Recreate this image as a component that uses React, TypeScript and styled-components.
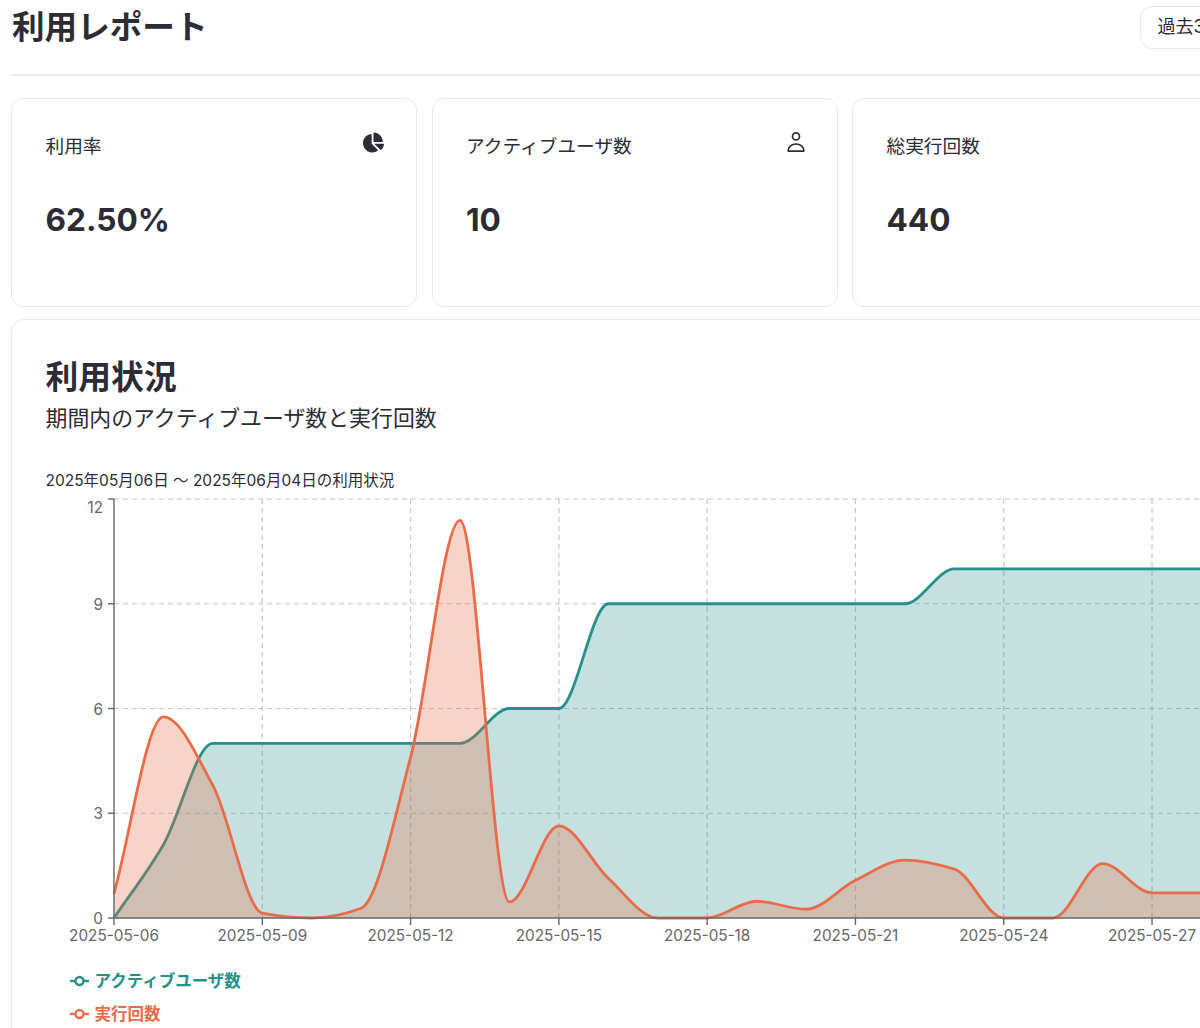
import React from "react";
import styled, { createGlobalStyle } from "styled-components";
import { FaChartPie } from "react-icons/fa";

const TEAL = "#26908a";
const ORANGE = "#e96c4a";
const DAY_WIDTH = 49.43;
const AXIS_X = 68;
const AXIS_TOP = 7;
const AXIS_BOTTOM = 426;
const UNIT = (AXIS_BOTTOM - AXIS_TOP) / 12;

const activeUsers = [
    0, 2.1, 5, 5, 5, 5, 5, 5, 6, 6, 9, 9, 9, 9, 9, 9, 9, 10, 10, 10, 10, 10, 10, 10, 10, 10, 10, 10, 10, 10,
];
const executions = [
    0.7, 5.76, 3.8, 0.14, 0, 0.28, 4.6, 11.39, 0.46, 2.64, 1.14, 0, 0, 0.48, 0.25, 1.08, 1.66, 1.4, 0, 0, 1.56,
    0.72, 0.72, 0.72, 1.2, 0.6, 0.9, 1.1, 0.7, 0.5,
];
const tickDays = [0, 3, 6, 9, 12, 15, 18, 21, 24, 27];
const tickLabels = [
    "2025-05-06",
    "2025-05-09",
    "2025-05-12",
    "2025-05-15",
    "2025-05-18",
    "2025-05-21",
    "2025-05-24",
    "2025-05-27",
    "2025-05-30",
    "2025-06-02",
];
const yTicks = [0, 3, 6, 9, 12];

type Point = [number, number];

function toPoints(values: number[]): Point[] {
    return values.map((v, i) => [AXIS_X + i * DAY_WIDTH, AXIS_BOTTOM - v * UNIT]);
}

// monotone cubic, same curve the chart in the screenshot uses
function monotonePath(points: Point[]) {
    const n = points.length;
    const slopes: number[] = [];
    for (let i = 0; i < n - 1; i++) {
        slopes.push((points[i + 1][1] - points[i][1]) / (points[i + 1][0] - points[i][0]));
    }
    const tangents: number[] = [slopes[0]];
    for (let i = 1; i < n - 1; i++) {
        const a = slopes[i - 1];
        const b = slopes[i];
        tangents.push(a * b <= 0 ? 0 : (2 * a * b) / (a + b));
    }
    tangents.push(slopes[n - 2]);
    let d = `M${points[0][0]},${points[0][1]}`;
    for (let i = 0; i < n - 1; i++) {
        const [x0, y0] = points[i];
        const [x1, y1] = points[i + 1];
        const h = (x1 - x0) / 3;
        d += `C${x0 + h},${y0 + tangents[i] * h} ${x1 - h},${y1 - tangents[i + 1] * h} ${x1},${y1}`;
    }
    return d;
}

function areaPath(points: Point[]) {
    const last = points[points.length - 1];
    return `${monotonePath(points)}L${last[0]},${AXIS_BOTTOM}L${points[0][0]},${AXIS_BOTTOM}Z`;
}

function UsageChart() {
    const userPoints = toPoints(activeUsers);
    const execPoints = toPoints(executions);
    const plotRight = AXIS_X + 29 * DAY_WIDTH;

    return (
        <ChartSvg width={1540} height={460}>
            <g stroke="#c6c6c6" strokeWidth={1.2} strokeDasharray="5 4">
                {yTicks
                    .filter((t) => t > 0)
                    .map((t) => (
                        <line key={t} x1={AXIS_X} x2={plotRight} y1={AXIS_BOTTOM - t * UNIT} y2={AXIS_BOTTOM - t * UNIT} />
                    ))}
                {tickDays
                    .filter((d) => d > 0)
                    .map((d) => (
                        <line key={d} x1={AXIS_X + d * DAY_WIDTH} x2={AXIS_X + d * DAY_WIDTH} y1={AXIS_TOP} y2={AXIS_BOTTOM} />
                    ))}
            </g>
            <path d={areaPath(userPoints)} fill={TEAL} fillOpacity={0.27} />
            <path d={monotonePath(userPoints)} fill="none" stroke={TEAL} strokeWidth={2.8} />
            <path d={areaPath(execPoints)} fill={ORANGE} fillOpacity={0.3} />
            <path d={monotonePath(execPoints)} fill="none" stroke={ORANGE} strokeWidth={2.8} />
            <g stroke="#666" strokeWidth={1.4}>
                <line x1={AXIS_X} x2={AXIS_X} y1={AXIS_TOP} y2={AXIS_BOTTOM} />
                <line x1={AXIS_X} x2={plotRight} y1={AXIS_BOTTOM} y2={AXIS_BOTTOM} />
                {yTicks.map((t) => (
                    <line key={t} x1={AXIS_X - 6} x2={AXIS_X} y1={AXIS_BOTTOM - t * UNIT} y2={AXIS_BOTTOM - t * UNIT} />
                ))}
                {tickDays.map((d) => (
                    <line key={d} x1={AXIS_X + d * DAY_WIDTH} x2={AXIS_X + d * DAY_WIDTH} y1={AXIS_BOTTOM} y2={AXIS_BOTTOM + 7} />
                ))}
            </g>
            {yTicks.map((t) => (
                <TickText key={t} x={AXIS_X - 11} y={t === 12 ? AXIS_TOP + 14 : AXIS_BOTTOM - t * UNIT + 6} textAnchor="end">
                    {t}
                </TickText>
            ))}
            {tickDays.map((d, i) => (
                <TickText key={d} x={AXIS_X + d * DAY_WIDTH} y={AXIS_BOTTOM + 23} textAnchor="middle">
                    {tickLabels[i]}
                </TickText>
            ))}
        </ChartSvg>
    );
}

function UserIcon() {
    return (
        <svg width={18} height={20} viewBox="0 0 18 20" fill="none" stroke="#2c2c36" strokeWidth={1.7}>
            <circle cx={9} cy={4.4} r={3.5} />
            <path d="M1.2 19.1C1.2 14.9 4.6 12 9 12C13.4 12 16.8 14.9 16.8 19.1Z" strokeLinejoin="round" />
        </svg>
    );
}

function LegendIcon({ color }: { color: string }) {
    return (
        <svg width={19} height={12} viewBox="0 0 19 12">
            <line x1={0} x2={19} y1={6} y2={6} stroke={color} strokeWidth={2.4} />
            <circle cx={9.5} cy={6} r={4} fill="#fff" stroke={color} strokeWidth={2.4} />
        </svg>
    );
}

export default function App() {
    return (
        <>
            <GlobalStyle />
            <Page>
                <HeaderRow>
                    <PageTitle>利用レポート</PageTitle>
                    <PeriodSelect>過去30日間</PeriodSelect>
                </HeaderRow>
                <Divider />
                <StatGrid>
                    <StatCard>
                        <StatHead>
                            <StatLabel>利用率</StatLabel>
                            <PieSlot>
                                <FaChartPie size={21} />
                            </PieSlot>
                        </StatHead>
                        <StatValue>62.50%</StatValue>
                    </StatCard>
                    <StatCard>
                        <StatHead>
                            <StatLabel>アクティブユーザ数</StatLabel>
                            <UserSlot>
                                <UserIcon />
                            </UserSlot>
                        </StatHead>
                        <StatValue>10</StatValue>
                    </StatCard>
                    <StatCard>
                        <StatHead>
                            <StatLabel>総実行回数</StatLabel>
                        </StatHead>
                        <StatValue>440</StatValue>
                    </StatCard>
                </StatGrid>
                <UsageCard>
                    <UsageTitle>利用状況</UsageTitle>
                    <UsageSubtitle>期間内のアクティブユーザ数と実行回数</UsageSubtitle>
                    <ChartCaption>2025年05月06日 〜 2025年06月04日の利用状況</ChartCaption>
                    <UsageChart />
                    <Legend>
                        <LegendItem $color={TEAL}>
                            <LegendIcon color={TEAL} />
                            アクティブユーザ数
                        </LegendItem>
                        <LegendItem $color={ORANGE}>
                            <LegendIcon color={ORANGE} />
                            実行回数
                        </LegendItem>
                    </Legend>
                </UsageCard>
            </Page>
        </>
    );
}

const GlobalStyle = createGlobalStyle`
    html, body {
        margin: 0;
        height: 100%;
        overflow: hidden;
        background: #fff;
    }
    body {
        font-family: Inter, "Noto Sans CJK JP", sans-serif;
        color: #2c2c36;
    }
`;

const Page = styled.div`
    width: 1669px;
    padding: 6px 0 0 11px;
`;

const HeaderRow = styled.div`
    display: flex;
    align-items: center;
    justify-content: space-between;
    width: 1249px;
    height: 43px;
`;

const PageTitle = styled.h1`
    margin: 0 0 0 1px;
    font-size: 32.6px;
    font-weight: 700;
    line-height: 43px;
`;

const PeriodSelect = styled.div`
    box-sizing: border-box;
    width: 120px;
    height: 43px;
    padding: 0 16.5px;
    border: 1.5px solid #e2e8f2;
    border-radius: 12px;
    font-size: 18px;
    line-height: 39px;
    white-space: nowrap;
    overflow: hidden;
`;

const Divider = styled.div`
    height: 2px;
    margin-top: 25px;
    background: #e8edf5;
`;

const StatGrid = styled.div`
    display: grid;
    grid-template-columns: repeat(3, 406px);
    gap: 14.5px;
    margin-top: 22px;
`;

const StatCard = styled.div`
    box-sizing: border-box;
    height: 209px;
    padding: 35px 32.5px 0 33.5px;
    border: 1.5px solid #e2e8f2;
    border-radius: 12px;
`;

const StatHead = styled.div`
    display: flex;
    align-items: flex-start;
    justify-content: space-between;
`;

const StatLabel = styled.div`
    font-size: 18.7px;
    line-height: 26px;
`;

const PieSlot = styled.div`
    display: flex;
    height: 20px;
    margin: -2.5px 0 0 0;
    color: #2c2c36;
`;

const UserSlot = styled.div`
    display: flex;
    height: 20px;
    margin: -2.5px -1px 0 0;
`;

const StatValue = styled.div`
    margin-top: 38px;
    font-size: 31.6px;
    font-weight: 700;
    line-height: 44px;
`;

const UsageCard = styled.div`
    box-sizing: border-box;
    margin-top: 12px;
    padding: 33.5px 33.5px 40px;
    border: 1.5px solid #e2e8f2;
    border-radius: 12px;
`;

const UsageTitle = styled.h2`
    margin: 0;
    font-size: 32.8px;
    font-weight: 700;
    line-height: 46px;
`;

const UsageSubtitle = styled.p`
    margin: 0;
    font-size: 21.9px;
    line-height: 36px;
`;

const ChartCaption = styled.div`
    margin-top: 33px;
    font-size: 15.5px;
    line-height: 23px;
`;

const ChartSvg = styled.svg`
    display: block;
`;

const TickText = styled.text`
    font-family: Inter, sans-serif;
    font-size: 15.3px;
    fill: #666;
`;

const Legend = styled.div`
    display: flex;
    flex-direction: column;
    gap: 9px;
    margin: 17px 0 0 24px;
`;

const LegendItem = styled.div<{ $color: string }>`
    display: flex;
    align-items: center;
    gap: 6px;
    font-size: 16.5px;
    font-weight: 600;
    line-height: 24px;
    color: ${(props) => props.$color};
`;
